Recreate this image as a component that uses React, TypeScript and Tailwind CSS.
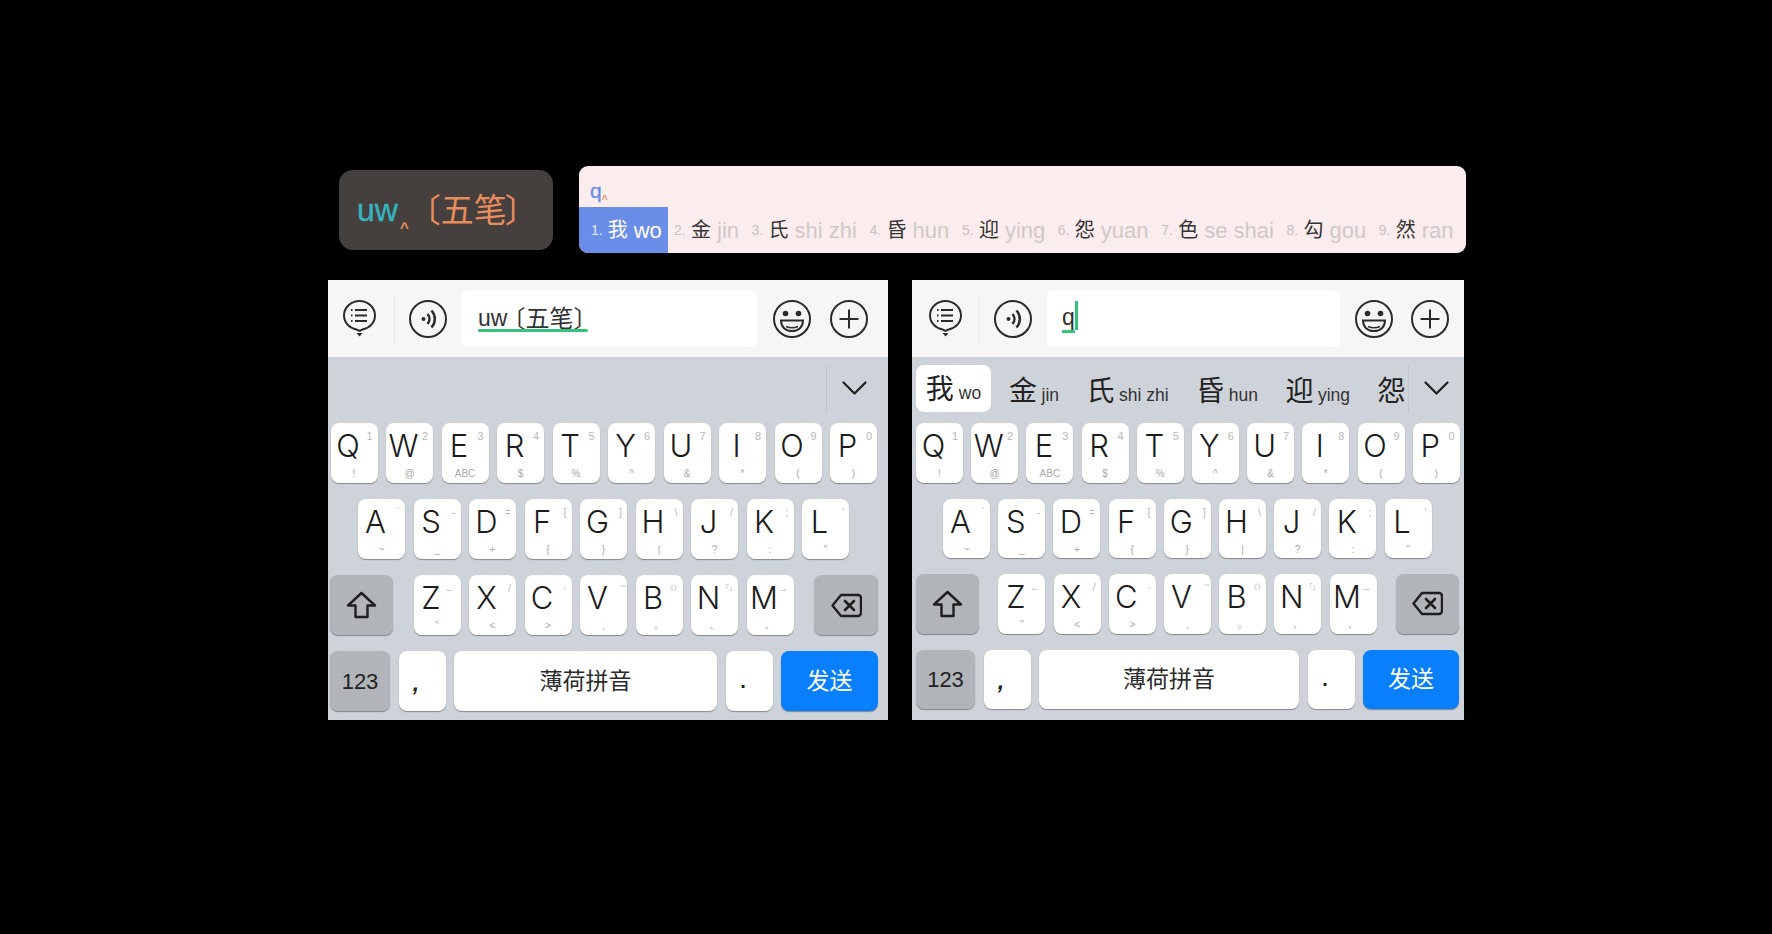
const CJK = `"Liberation Sans","Noto Sans CJK SC",sans-serif`;

const row1 = [["Q","1","!"],["W","2","@"],["E","3","ABC"],["R","4","$"],["T","5","%"],["Y","6","^"],["U","7","&"],["I","8","*"],["O","9","("],["P","0",")"]];
const row2 = [["A","`","~"],["S","-","_"],["D","=","+"],["F","[","{"],["G","]","}"],["H","\\","|"],["J","/","?"],["K",";",":"],["L","'","\""]];
const row3 = [["Z","←","''"],["X","/","<"],["C","·",">"],["V","“”",","],["B","《》","。"],["N","「」","、"],["M","→","、"]];

const cands = [["2.","金","jin"],["3.","氏","shi zhi"],["4.","昏","hun"],["5.","迎","ying"],["6.","怨","yuan"],["7.","色","se shai"],["8.","勾","gou"],["9.","然","ran"]];
const chips = [["金","jin"],["氏","shi zhi"],["昏","hun"],["迎","ying"]];

function MenuIcon() {
  return (
    <svg width="33" height="37" viewBox="0 0 33 37" fill="none" stroke="#2b2b2b" strokeWidth="2" className="shrink-0">
      <path d="M16.5 1C8 1 1 7.6 1 15.5c0 7 5.400 12.800 12.500 14l3 1.500 3-1.500C26.600 28.300 32 22.500 32 15.500 32 7.600 25 1 16.500 1Z" />
      <path d="M12 10h12M12 15.500h12M12 21h12M8 10h1.500M8 15.500h1.500M8 21h1.500" strokeWidth="2.200" />
      <path d="M13.500 33h6l-3 3.500Z" fill="#2b2b2b" stroke="none" />
    </svg>
  );
}
function SoundIcon() {
  return (
    <svg width="38" height="38" viewBox="0 0 38 38" fill="none" stroke="#2b2b2b" strokeWidth="2" className="shrink-0">
      <circle cx="19" cy="19" r="18" />
      <circle cx="14.500" cy="19" r="2" fill="#2b2b2b" stroke="none" />
      <path d="M18.500 14c2.600 3 2.600 7 0 10M22.500 10.500c4.400 5 4.400 12 0 17" strokeWidth="2.500" />
    </svg>
  );
}
function SmileIcon() {
  return (
    <svg width="38" height="38" viewBox="0 0 38 38" fill="none" stroke="#2b2b2b" strokeWidth="2" className="shrink-0">
      <circle cx="19" cy="19" r="18" />
      <circle cx="12.500" cy="13.500" r="2.800" fill="#2b2b2b" stroke="none" />
      <circle cx="25.500" cy="13.500" r="2.800" fill="#2b2b2b" stroke="none" />
      <path d="M8 20.500h22c0 6.500-4.500 10.500-11 10.500S8 27 8 20.500Z" strokeWidth="2" />
      <path d="M13 26.500c3.500 1.500 8.500 1.500 12 0" strokeWidth="1.600" />
    </svg>
  );
}
function PlusIcon() {
  return (
    <svg width="38" height="38" viewBox="0 0 38 38" fill="none" stroke="#2b2b2b" strokeWidth="2" className="shrink-0">
      <circle cx="19" cy="19" r="18" />
      <path d="M19 9.500v19M9.500 19h19" strokeWidth="2" />
    </svg>
  );
}
function ShiftIcon() {
  return (
    <svg width="31" height="28" viewBox="0 0 31 28" fill="none" stroke="#1f1f1f" strokeWidth="2.400" strokeLinejoin="round">
      <path d="M15.500 2 2 14.500h7.500V26h12V14.500H29Z" />
    </svg>
  );
}
function BackIcon() {
  return (
    <svg width="31" height="25" viewBox="0 0 31 25" fill="none" stroke="#1f1f1f" strokeWidth="2.400" strokeLinejoin="round" strokeLinecap="round">
      <path d="M10 2h17a3 3 0 0 1 3 3v15a3 3 0 0 1-3 3H10L1.500 12.500Z" />
      <path d="m14 8 9 9M23 8l-9 9" strokeWidth="2.600" />
    </svg>
  );
}
function Chevron() {
  return (
    <svg width="25" height="14" viewBox="0 0 25 14" fill="none" stroke="#1f1f1f" strokeWidth="2.200" strokeLinecap="round" strokeLinejoin="round">
      <path d="m1.500 1.500 11 11 11-11" />
    </svg>
  );
}

function Key({ k, w, h }: { k: string[]; w: string; h: string }) {
  const wide = k[1].length > 1;
  return (
    <div className={`relative shrink-0 rounded-[8px] bg-white shadow-[0_1px_1px_#868a90] ${w} ${h}`}>
      <span className="absolute left-[17.500px] top-0 -translate-x-1/2 text-[31px] font-light leading-[46px] text-[#1c1c1c]" style={{ fontFamily: "Inter, sans-serif" }}>{k[0]}</span>
      <span className={`absolute top-[5px] leading-[16px] text-[#b8b8b8] whitespace-nowrap ${wide ? "right-[2px] text-[7px]" : "right-[5px] text-[11px]"}`} style={{ fontFamily: CJK }}>{k[1]}</span>
      <span className="absolute inset-x-0 top-[44px] text-center text-[10px] leading-[14px] text-[#a8a8a8] whitespace-nowrap" style={{ fontFamily: CJK }}>{k[2]}</span>
    </div>
  );
}

function Dark({ children, w, h }: { children: React.ReactNode; w: string; h: string }) {
  return <div className={`flex shrink-0 items-center justify-center rounded-[8px] bg-[#b1b5b9] shadow-[0_1px_1px_#80848a] ${w} ${h}`}>{children}</div>;
}

function Phone({ c }: { c: any }) {
  return (
    <div className={`flex h-[440px] shrink-0 flex-col ${c.width}`} style={{ fontFamily: CJK }}>
      <div className={`flex h-[77px] shrink-0 items-center bg-[#f6f6f6] ${c.barPl}`}>
        <MenuIcon />
        <div className={`h-[54px] w-px shrink-0 bg-[#ececec] ${c.divMl}`} />
        <div className="ml-[14px] flex"><SoundIcon /></div>
        <div className={`flex h-[57px] shrink-0 items-center rounded-[6px] bg-white ${c.input}`}>
          {c.typed}
        </div>
        <div className={`flex ${c.smileMl}`}><SmileIcon /></div>
        <div className={`flex ${c.plusMl}`}><PlusIcon /></div>
      </div>
      <div className="flex flex-1 flex-col gap-[16px] bg-[#ced2d9]">
        <div className="-mb-[16px] flex h-[66px] shrink-0 items-center">{c.cand}</div>
        <div className={`flex ${c.pitch} ${c.r1}`}>
          {row1.map((k) => <Key key={k[0]} k={k} w="w-[47px]" h={c.keyH} />)}
        </div>
        <div className={`flex ${c.pitch} ${c.r2}`}>
          {row2.map((k) => <Key key={k[0]} k={k} w="w-[47px]" h={c.keyH} />)}
        </div>
        <div className={`flex items-center justify-between ${c.r3}`}>
          <Dark w="w-[63px]" h={c.keyH}><ShiftIcon /></Dark>
          <div className={`flex ${c.pitch}`}>
            {row3.map((k) => <Key key={k[0]} k={k} w="w-[47px]" h={c.keyH} />)}
          </div>
          <Dark w={c.backW} h={c.keyH}><BackIcon /></Dark>
        </div>
        <div className={`flex gap-[8.500px] ${c.r3}`}>
          <Dark w={c.numW} h={c.keyH}><span className="text-[22px] text-[#222]">123</span></Dark>
          <div className={`flex w-[47px] shrink-0 items-center justify-center rounded-[8px] bg-white pr-[12px] pt-[3px] text-[23px] font-bold italic leading-[22px] text-[#222] shadow-[0_1px_1px_#868a90] ${c.keyH}`}>,</div>
          <div className={`flex flex-1 items-center justify-center rounded-[8px] bg-white text-[23px] text-[#2b2b2b] shadow-[0_1px_1px_#868a90] ${c.keyH}`}>薄荷拼音</div>
          <div className={`flex w-[47px] shrink-0 items-center justify-center rounded-[8px] bg-white pr-[12px] text-[20px] font-bold leading-[22px] text-[#222] shadow-[0_1px_1px_#868a90] ${c.keyH}`}>.</div>
          <div className={`flex shrink-0 items-center justify-center rounded-[8px] bg-[#0a7ffb] text-[23px] text-white shadow-[0_1px_1px_#80848a] ${c.sendW} ${c.keyH}`}>发送</div>
        </div>
      </div>
    </div>
  );
}

const leftCfg = {
  width: "w-[560px]", barPl: "pl-[15px]", divMl: "ml-[18px]", input: "ml-[14px] w-[296px] pl-[17px]",
  smileMl: "ml-[16px]", plusMl: "ml-[19px]", pitch: "gap-[8.500px]",
  keyH: "h-[60px]", r1: "pl-[2.500px]", r2: "pl-[30px]", r3: "pl-[2px] pr-[10px]",
  backW: "w-[64px]", numW: "w-[60px]", sendW: "w-[97px]",
  typed: (
    <span className="relative flex h-[30px] w-[110px] items-center text-[#333] whitespace-nowrap">
      <span className="text-[23px]">uw</span>
      <span className="-ml-[6px] text-[24px]">〔五笔〕</span>
      <span className="absolute left-0 top-[25px] h-[3px] w-[110px] rounded-full bg-[#35c27a]" />
    </span>
  ),
  cand: (
    <div className="flex h-full w-full items-center justify-end">
      <div className="h-[48px] w-px bg-[#bfc3c9]" />
      <div className="ml-[15px] mr-[21px] flex pb-[4px]"><Chevron /></div>
    </div>
  ),
};

const rightCfg = {
  width: "w-[552px]", barPl: "pl-[17px]", divMl: "ml-[17px]", input: "ml-[15px] w-[293px] pl-[15px]",
  smileMl: "ml-[15px]", plusMl: "ml-[18px]", pitch: "gap-[8.200px]",
  keyH: "h-[59.500px]", r1: "pl-[4px]", r2: "pl-[31px]", r3: "pl-[4px] pr-[5px]",
  backW: "w-[63px]", numW: "w-[59px]", sendW: "w-[96px]",
  typed: (
    <span className="flex items-start">
      <span className="border-b-[3px] border-[#35c27a] text-[23px] leading-[26px] text-[#333]">q</span>
      <span className="-mt-[3px] h-[29px] w-[3px] bg-[#35c27a]" />
    </span>
  ),
  cand: (
    <div className="flex h-full w-full items-center pl-[4px] pb-[3px]">
      <div className="flex h-[47px] w-[75px] shrink-0 items-baseline justify-center rounded-[8px] bg-white pt-[6px]">
        <span className="text-[28px] leading-[38px] text-[#222]">我</span>
        <span className="ml-[5px] text-[17.500px] text-[#333]">wo</span>
      </div>
      <div className="ml-[18px] flex flex-1 items-baseline gap-[27.500px] pt-[6px] whitespace-nowrap">
        {chips.map(([ch, py]) => (
          <span key={ch} className="flex items-baseline">
            <span className="text-[28px] leading-[38px] text-[#222]">{ch}</span>
            <span className="ml-[4.500px] text-[17.500px] text-[#333]">{py}</span>
          </span>
        ))}
        <span className="text-[28px] leading-[38px] text-[#222]">怨</span>
      </div>
      <div className="h-[48px] w-px shrink-0 bg-[#c4c8ce]" />
      <div className="ml-[15px] mr-[15px] flex shrink-0 pb-[2px]"><Chevron /></div>
    </div>
  ),
};

export default function App() {
  return (
    <div className="h-[934px] w-full overflow-hidden bg-black pl-[328px] pt-[166px]" style={{ fontFamily: CJK }}>
      <div className="ml-[11px] flex items-start gap-[26px]">
        <div className="mt-[4px] flex h-[80px] w-[214px] shrink-0 items-center rounded-[14px] bg-[#453f3e] pl-[18px] whitespace-nowrap">
          <span className="text-[32px] font-medium leading-none text-[#35b4bd]" style={{ WebkitTextStroke: "0.4px #35b4bd" }}>uw</span>
          <span className="ml-[2px] mt-[24px] translate-y-[5px] text-[15px] font-bold leading-none text-[#e98c5c]">^</span>
          <span className="-ml-[1px] text-[33px] leading-none text-[#e98c5c]">〔五笔</span>
          <span className="-ml-[2px] text-[33px] leading-none text-[#e98c5c]">〕</span>
        </div>
        <div className="flex h-[87px] w-[887px] shrink-0 flex-col overflow-hidden rounded-[9px] bg-[#fbeded]">
          <div className="flex h-[41px] shrink-0 items-end pl-[11px] pb-[4px]">
            <span className="text-[21px] leading-[24px] text-[#6b8ee8]" style={{ WebkitTextStroke: "0.4px #6b8ee8" }}>q</span>
            <span className="mb-[1px] translate-y-[2px] text-[10px] font-bold leading-[9px] text-[#e98c5c]">^</span>
          </div>
          <div className="flex h-[46px] shrink-0 items-center whitespace-nowrap">
            <div className="flex h-full w-[89px] shrink-0 items-center bg-[#6a8de8] pl-[12px] text-white">
              <span className="text-[14px] text-[#e8edfb]">1.</span>
              <span className="ml-[5px] text-[20px]">我</span>
              <span className="ml-[6px] text-[22px]">wo</span>
            </div>
            <div className="ml-[6px] flex items-center gap-[12.600px]">
              {cands.map(([n, ch, py]) => (
                <span key={n} className="flex items-center">
                  <span className="w-[17px] text-[14px] text-[#c9c1c1]">{n}</span>
                  <span className="text-[20px] text-[#333]">{ch}</span>
                  <span className="ml-[6px] text-[22px] text-[#d0c8c8]">{py}</span>
                </span>
              ))}
            </div>
          </div>
        </div>
      </div>
      <div className="mt-[27px] flex gap-[24px]">
        <Phone c={leftCfg} />
        <Phone c={rightCfg} />
      </div>
    </div>
  );
}
